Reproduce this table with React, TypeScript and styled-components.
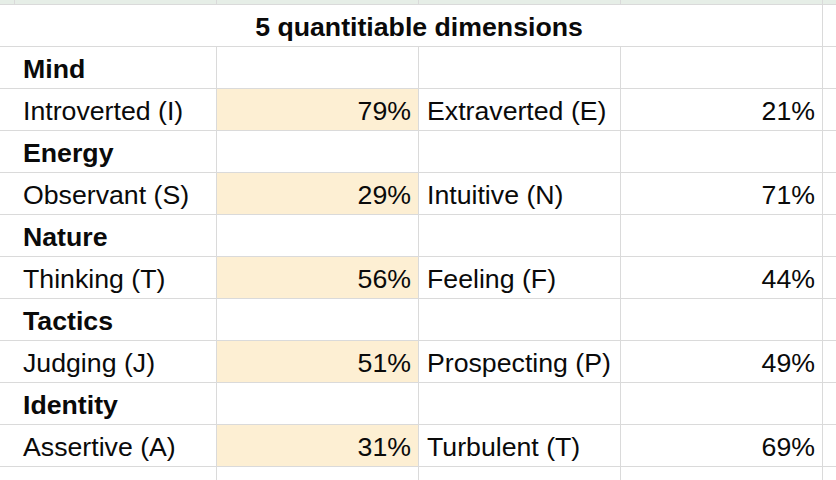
import React from "react";
import styled, { createGlobalStyle } from "styled-components";

const Global = createGlobalStyle`
  html, body { margin: 0; padding: 0; background: #ffffff; }
  body { font-family: "Liberation Sans", Arial, sans-serif; }
`;

const Sheet = styled.div`
  display: grid;
  grid-template-columns: 14px 201px 201px 201px 201px 1fr;
  grid-template-rows: 4px 41px repeat(10, 41px) 14px;
  gap: 1px;
  background: #dadada;
  width: 836px;
  height: 480px;
  overflow: hidden;
`;

const Cell = styled.div<{ $bg?: string; $align?: "left" | "right" | "center"; $bold?: boolean; $span?: number }>`
  background: ${(p) => p.$bg ?? "#ffffff"};
  display: flex;
  align-items: center;
  justify-content: ${(p) => (p.$align === "right" ? "flex-end" : p.$align === "center" ? "center" : "flex-start")};
  padding: 4px 7px 0 8px;
  font-size: 26.7px;
  font-weight: ${(p) => (p.$bold ? 700 : 400)};
  color: #0a0a0a;
  white-space: nowrap;
  overflow: hidden;
  ${(p) => (p.$span ? `grid-column: span ${p.$span};` : "")}
`;

const Strip = styled.div`
  background: #e6eee7;
`;

const HIGHLIGHT = "#fdefd3";

const data = [
  { group: "Mind", a: "Introverted (I)", av: "79%", b: "Extraverted (E)", bv: "21%" },
  { group: "Energy", a: "Observant (S)", av: "29%", b: "Intuitive (N)", bv: "71%" },
  { group: "Nature", a: "Thinking (T)", av: "56%", b: "Feeling (F)", bv: "44%" },
  { group: "Tactics", a: "Judging (J)", av: "51%", b: "Prospecting (P)", bv: "49%" },
  { group: "Identity", a: "Assertive (A)", av: "31%", b: "Turbulent (T)", bv: "69%" },
];

export default function App() {
  return (
    <>
      <Global />
      <Sheet>
        {Array.from({ length: 6 }).map((_, i) => (
          <Strip key={"s" + i} />
        ))}
        <Cell />
        <Cell $span={4} $bold $align="center">5 quantitiable dimensions</Cell>
        <Cell />
        {data.map((r) => (
          <React.Fragment key={r.group}>
            <Cell />
            <Cell $bold>{r.group}</Cell>
            <Cell />
            <Cell />
            <Cell />
            <Cell />
            <Cell />
            <Cell>{r.a}</Cell>
            <Cell $bg={HIGHLIGHT} $align="right">{r.av}</Cell>
            <Cell>{r.b}</Cell>
            <Cell $align="right">{r.bv}</Cell>
            <Cell />
          </React.Fragment>
        ))}
        {Array.from({ length: 6 }).map((_, i) => (
          <Cell key={"e" + i} />
        ))}
      </Sheet>
    </>
  );
}
